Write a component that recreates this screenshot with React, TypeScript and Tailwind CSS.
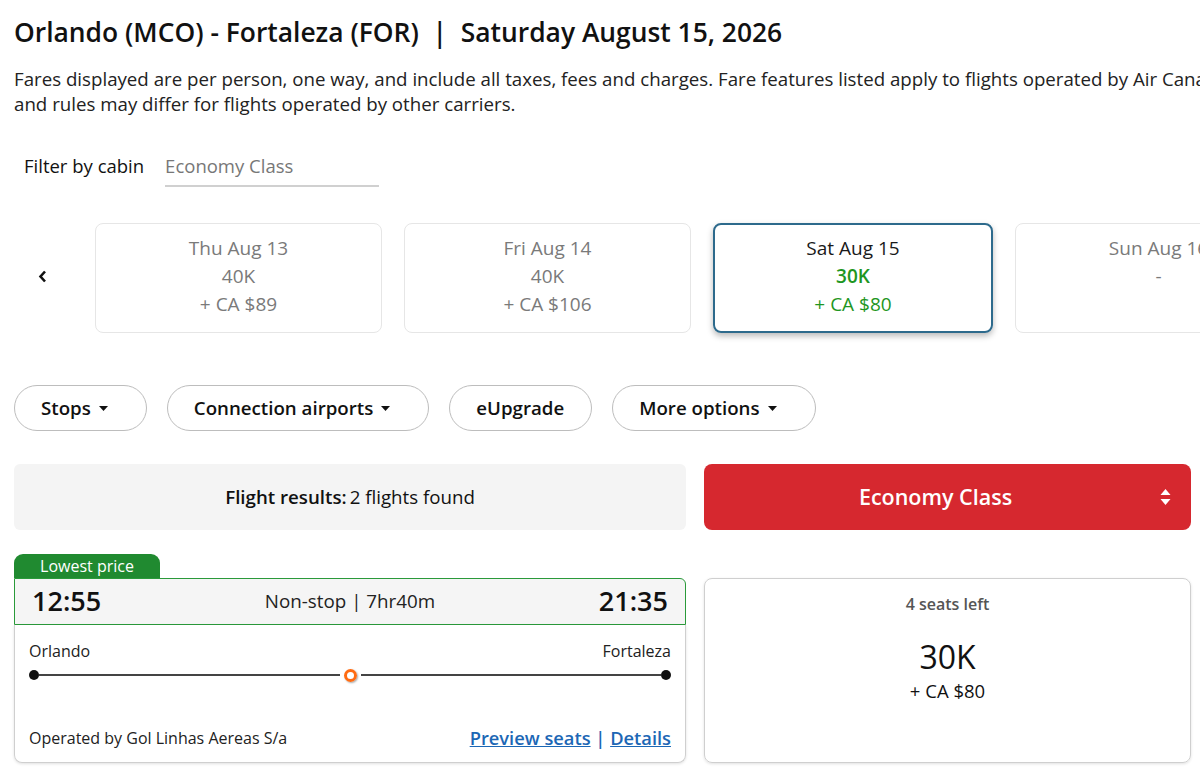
import { Fragment } from 'react'

const Caret = () => (
  <svg width="9" height="5" viewBox="0 0 9 5" className="ml-[8px] mr-[11px]">
    <path d="M0 0h9L4.5 5z" fill="#111" />
  </svg>
)

const dates = [
  { day: 'Thu Aug 13', pts: '40K', cash: '+ CA $89' },
  { day: 'Fri Aug 14', pts: '40K', cash: '+ CA $106' },
  { day: 'Sat Aug 15', pts: '30K', cash: '+ CA $80', active: true },
  { day: 'Sun Aug 16', pts: '-', cash: '' },
]

const filters = [
  { label: 'Stops', caret: true },
  { label: 'Connection airports', caret: true },
  { label: 'eUpgrade', caret: false },
  { label: 'More options', caret: true },
]

const App = () => {
  return (
    <div className="h-[771px] w-[1200px] overflow-hidden bg-white font-['Open_Sans',sans-serif] text-[#111]">
      <div className="w-[1260px] pl-[14px] pt-[14px]">
        <h1 className="whitespace-nowrap text-[26.4px] font-semibold leading-[36px]">
          Orlando (MCO) - Fortaleza (FOR)&nbsp; |&nbsp; Saturday August 15, 2026
        </h1>
        <p className="mt-[16px] whitespace-nowrap text-[18.7px] leading-[25px] text-[#222]">
          Fares displayed are per person, one way, and include all taxes, fees and charges. Fare features listed apply to flights operated by Air Canada
          <br />
          and rules may differ for flights operated by other carriers.
        </p>

        <div className="mt-[38px] flex items-start text-[18.5px] leading-[24px]">
          <span className="pl-[10px]">Filter by cabin</span>
          <div className="ml-[21px] w-[214px] border-b-2 border-[#d0d0d0] pb-[7px] text-[#777]">Economy Class</div>
        </div>

        <div className="mt-[36px] flex items-center">
          <div className="flex w-[81px] shrink-0 items-center pl-[24px]">
            <svg width="9" height="13" viewBox="0 0 9 13" className="-mt-[4px]">
              <path d="M7 1.5L2.5 6.5 7 11.5" fill="none" stroke="#111" strokeWidth="2.6" />
            </svg>
          </div>
          <div className="flex gap-[22px]">
            {dates.map((d) => (
              <div
                key={d.day}
                className={
                  d.active
                    ? 'flex h-[110px] w-[280px] shrink-0 flex-col items-center rounded-[8px] border-2 border-[#2d6a8c] pt-[9px] text-[19px] leading-[28px] text-[#1a1a1a] shadow-[0_3px_6px_rgba(0,0,0,0.28)]'
                    : 'flex h-[110px] w-[287px] shrink-0 flex-col items-center rounded-[8px] border border-[#e6e6e6] pt-[10px] text-[19px] leading-[28px] text-[#7a7a7a]'
                }
              >
                <span>{d.day}</span>
                {d.active ? (
                  <Fragment>
                    <span className="font-semibold text-[#1e9622]">{d.pts}</span>
                    <span className="text-[#1e9622]">{d.cash}</span>
                  </Fragment>
                ) : (
                  <Fragment>
                    <span>{d.pts}</span>
                    <span>{d.cash}</span>
                  </Fragment>
                )}
              </div>
            ))}
          </div>
        </div>

        <div className="mt-[52px] flex gap-[20px]">
          {filters.map((f) => (
            <button
              key={f.label}
              className="flex h-[46px] items-center rounded-full border border-[#bdbdbd] pl-[26px] pr-[27px] text-[18.7px] font-semibold text-[#111]"
            >
              {f.label}
              {f.caret && <Caret />}
            </button>
          ))}
        </div>

        <div className="mt-[33px] flex gap-[18px]">
          <div className="flex h-[66px] w-[672px] items-center justify-center rounded-[6px] bg-[#f4f4f4] text-[18.7px]">
            <span className="font-semibold">Flight results:</span>
            <span className="ml-[3px]">2 flights found</span>
          </div>
          <div className="relative flex h-[66px] w-[487px] items-center justify-center rounded-[8px] bg-[#d6282f] pr-[24px] text-[21.5px] font-semibold text-white">
            Economy Class
            <svg width="11" height="18" viewBox="0 0 11 18" className="absolute right-[20px] top-[24px]">
              <path d="M5.5 1L10.5 7H0.5z" fill="#fff" />
              <path d="M5.5 17L10.5 11H0.5z" fill="#fff" />
            </svg>
          </div>
        </div>

        <div className="mt-[24px] flex items-start gap-[18px]">
          <div className="w-[672px]">
            <div className="flex h-[24px] w-[146px] items-center justify-center rounded-t-[9px] bg-[#208a30] text-[16px] leading-[24px] text-white">
              Lowest price
            </div>
            <div className="flex h-[47px] items-center justify-between rounded-tr-[6px] border border-[#2a9a3a] bg-[#f5f5f5] px-[17px]">
              <span className="text-[27px] font-semibold">12:55</span>
              <span className="text-[18.8px] text-[#222]">Non-stop | 7hr40m</span>
              <span className="text-[27px] font-semibold">21:35</span>
            </div>
            <div className="rounded-b-[8px] border border-t-0 border-[#cfcfcf] px-[14px] pb-[12px] pt-[16px] shadow-[0_1px_3px_rgba(0,0,0,0.12)]">
              <div className="flex justify-between text-[16px] leading-[20px] text-[#222]">
                <span>Orlando</span>
                <span>Fortaleza</span>
              </div>
              <div className="mt-[8px] flex h-[12px] items-center">
                <span className="h-[10px] w-[10px] rounded-full bg-[#111]" />
                <span className="h-[2px] flex-1 bg-[#444]" />
                <span className="mx-[4px] h-[13px] w-[13px] rounded-full border-[3px] border-[#ff6b12] shadow-[1px_1px_2px_rgba(0,0,0,0.35)]" />
                <span className="h-[2px] flex-1 bg-[#444]" />
                <span className="h-[10px] w-[10px] rounded-full bg-[#111]" />
              </div>
              <div className="mt-[45px] flex items-center justify-between">
                <span className="text-[16px] text-[#222]">Operated by Gol Linhas Aereas S/a</span>
                <span className="text-[18.3px] font-semibold leading-[24px] text-[#1c67b5]">
                  <a className="underline">Preview seats</a> | <a className="underline">Details</a>
                </span>
              </div>
            </div>
          </div>
          <div className="mt-[24px] flex h-[185px] w-[487px] flex-col items-center rounded-[8px] border border-[#cfcfcf] pt-[15px] shadow-[0_1px_3px_rgba(0,0,0,0.12)]">
            <span className="text-[16px] font-semibold leading-[20px] text-[#555]">4 seats left</span>
            <span className="mt-[24px] text-[32px] leading-[38px]">30K</span>
            <span className="mt-[3px] text-[18.5px] leading-[24px]">+ CA $80</span>
          </div>
        </div>
      </div>
    </div>
  )
}

export default App
